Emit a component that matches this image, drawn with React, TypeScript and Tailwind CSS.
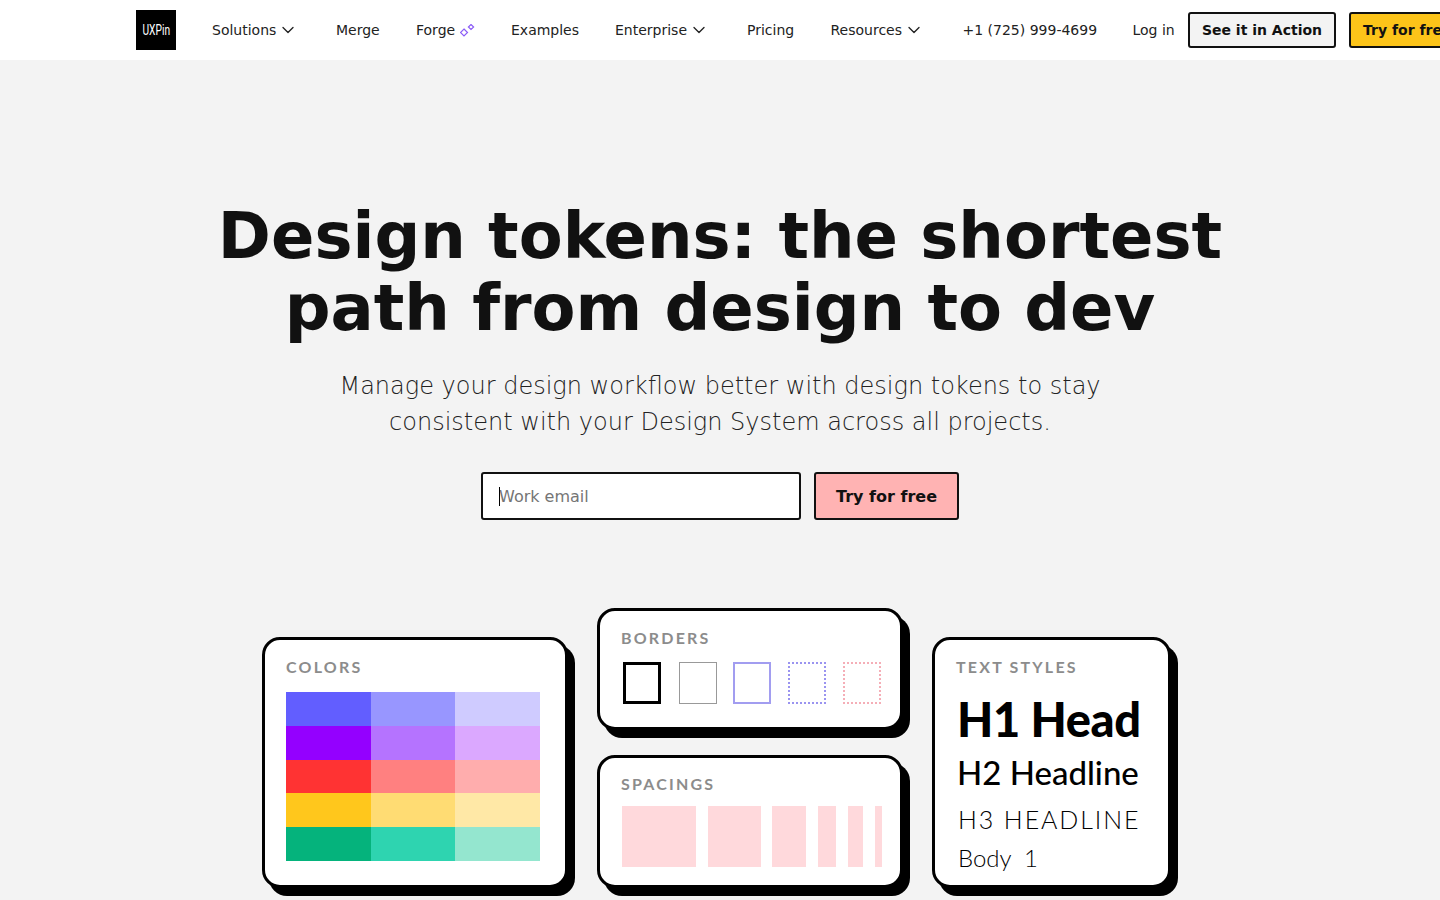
import { ChevronDown } from "lucide-react";

interface NavItem {
  label: string;
  width: string;
  chevron?: boolean;
  forge?: boolean;
}

const navItems: NavItem[] = [
  { label: "Solutions", width: "w-[124px]", chevron: true },
  { label: "Merge", width: "w-[80px]" },
  { label: "Forge", width: "w-[95px]", forge: true },
  { label: "Examples", width: "w-[104px]" },
  { label: "Enterprise", width: "w-[132px]", chevron: true },
  { label: "Pricing", width: "w-[83.5px]" },
  { label: "Resources", width: "w-[132px]", chevron: true },
  { label: "+1 (725) 999-4699", width: "w-[170px]" },
  { label: "Log in", width: "w-[55.5px]" },
];

const swatches = [
  ["bg-[#625eff]", "bg-[#9896ff]", "bg-[#cfcbff]"],
  ["bg-[#9400ff]", "bg-[#b573ff]", "bg-[#dba8ff]"],
  ["bg-[#ff3333]", "bg-[#ff8080]", "bg-[#ffadad]"],
  ["bg-[#ffc71c]", "bg-[#ffdc73]", "bg-[#ffe8a6]"],
  ["bg-[#05b37c]", "bg-[#2ed4b0]", "bg-[#94e6cf]"],
];

const borders = [
  "mr-[18px] border-[3px] border-black",
  "mr-[16px] border border-[#999999]",
  "mr-[17px] border-2 border-[#a29df0]",
  "mr-[17px] border-2 border-dotted border-[#9a94f0]",
  "border-2 border-dotted border-[#f5aeb7]",
];

const spacings = [
  "w-[74px] mr-[12px]",
  "w-[53px] mr-[11px]",
  "w-[34px] mr-[12px]",
  "w-[18px] mr-[12px]",
  "w-[15px] mr-[12px]",
  "w-[7px]",
];

const Forge = () => (
  <svg width="15" height="13" viewBox="0 0 15 13" fill="none" stroke="#8b5cf6" strokeWidth="1.2" className="ml-[5px] mt-[1px]">
    <path d="M4 5 7.5 8.5 4 12 .5 8.5Z" />
    <path d="M11 .5 13.6 3 11 5.5 8.4 3Z" />
  </svg>
);

const Card = ({ title, className, children }: { title: string; className: string; children: React.ReactNode }) => (
  <div className={`rounded-[18px] border-[3px] border-black bg-white shadow-[7px_8px_0_0_#000] ${className}`}>
    <div className="font-['Lato',sans-serif] text-[16px] leading-[20px] font-bold tracking-[2.2px] text-[#8c8c8c]">{title}</div>
    {children}
  </div>
);

export default function App() {
  return (
    <div className="h-[900px] overflow-hidden bg-[#f3f3f3] font-['DejaVu_Sans',sans-serif]">
      <header className="flex h-[60px] items-center overflow-hidden bg-white pl-[136px]">
        <div className="mr-[36px] flex h-[40px] w-[40px] shrink-0 items-center justify-center bg-black font-['Roboto',sans-serif] text-[15px] text-white">
          <span className="inline-block scale-x-[0.68]">UXPin</span>
        </div>
        {navItems.map(({ label, width, chevron, forge }) => (
          <a key={label} className={`flex shrink-0 items-center text-[14px] text-[#222222] ${width}`}>
            {label}
            {chevron && <ChevronDown size={20} strokeWidth={1.6} className="ml-[2px]" />}
            {forge && <Forge />}
          </a>
        ))}
        <button className="h-[36px] w-[148px] shrink-0 rounded-[3px] border-2 border-[#111111] bg-[#f3f3f3] text-[14px] font-bold text-[#111111]">
          See it in Action
        </button>
        <button className="ml-[13px] h-[36px] shrink-0 rounded-[3px] border-2 border-[#111111] bg-[#fcc419] px-[12px] text-[14px] font-bold whitespace-nowrap text-[#111111]">
          Try for free
        </button>
      </header>

      <main className="flex flex-col items-center">
        <h1 className="mt-[140px] text-center text-[64px] leading-[72px] font-bold text-[#111111]">
          Design tokens: the shortest
          <br />
          path from design to dev
        </h1>
        <p className="mt-[24px] text-center text-[24px] leading-[36px] font-extralight text-[#222222]">
          Manage your design workflow better with design tokens to stay
          <br />
          consistent with your Design System across all projects.
        </p>
        <form className="mt-[32px] flex gap-[13px]">
          <div className="relative">
            <input
              placeholder="Work email"
              className="h-[48px] w-[320px] rounded-[3px] border-2 border-[#111111] bg-white px-[16px] text-[16px] text-[#111111] outline-none placeholder:text-[#757575]"
            />
            <span className="absolute top-[15px] left-[18px] h-[19px] w-px bg-black" />
          </div>
          <button type="button" className="h-[48px] w-[145px] rounded-[3px] border-2 border-[#111111] bg-[#ffb3b3] pt-[1px] text-[16px] font-bold text-[#111111]">
            Try for free
          </button>
        </form>

        <section className="mt-[88px] flex items-start gap-[29px] pr-[7px]">
          <Card title="COLORS" className="mt-[29px] h-[251px] w-[306px] px-[21px] pt-[17px]">
            <div className="mt-[15px] grid w-[254px] grid-cols-3">
              {swatches.flat().map((color, i) => (
                <div key={i} className={`h-[33.8px] ${color}`} />
              ))}
            </div>
          </Card>

          <div className="flex flex-col gap-[25px]">
            <Card title="BORDERS" className="h-[122px] w-[306px] px-[21px] pt-[17px]">
              <div className="mt-[14px] flex pl-[2px]">
                {borders.map((border) => (
                  <div key={border} className={`h-[42px] w-[38px] shrink-0 ${border}`} />
                ))}
              </div>
            </Card>
            <Card title="SPACINGS" className="h-[133px] w-[306px] px-[21px] pt-[16px]">
              <div className="mt-[12px] flex pl-[1px]">
                {spacings.map((spacing) => (
                  <div key={spacing} className={`h-[61px] shrink-0 bg-[#ffd9dc] ${spacing}`} />
                ))}
              </div>
            </Card>
          </div>

          <Card title="TEXT STYLES" className="mt-[29px] h-[251px] w-[239px] px-[21px] pt-[17px]">
            <div className="pl-[1px] font-['Lato',sans-serif] text-black">
              <div className="mt-[14px] text-[47px] leading-[56px] font-black tracking-[-0.4px] whitespace-nowrap">H1 Head</div>
              <div className="mt-[5px] text-[33px] leading-[40px] font-medium whitespace-nowrap">H2 Headline</div>
              <div className="mt-[11px] pl-[1px] text-[25px] leading-[32px] font-light tracking-[1.9px] whitespace-nowrap">H3 HEADLINE</div>
              <div className="mt-[7px] pl-[1px] text-[24px] leading-[32px] font-light whitespace-pre">Body  1</div>
            </div>
          </Card>
        </section>
      </main>
    </div>
  );
}
